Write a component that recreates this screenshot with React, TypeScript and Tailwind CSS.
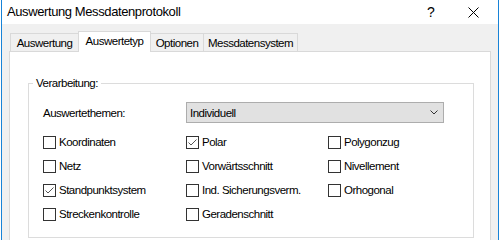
const options: { label: string; checked?: boolean }[] = [
  { label: "Koordinaten" },
  { label: "Polar", checked: true },
  { label: "Polygonzug" },
  { label: "Netz" },
  { label: "Vorwärtsschnitt" },
  { label: "Nivellement" },
  { label: "Standpunktsystem", checked: true },
  { label: "Ind. Sicherungsverm." },
  { label: "Orhogonal" },
  { label: "Streckenkontrolle" },
  { label: "Geradenschnitt" },
];

const tabs = ["Auswertung", "Auswertetyp", "Optionen", "Messdatensystem"];

function CheckBox({ label, checked }: { label: string; checked?: boolean }) {
  return (
    <div className="flex h-[24px] items-center gap-[3px]">
      <span className="grid h-[13px] w-[13px] place-items-center border border-[#333333] bg-white">
        {checked && (
          <svg width="11" height="11" viewBox="0 0 11 11" fill="none">
            <path d="M1.5 5.5 L4 8 L9.5 2.5" stroke="#555555" strokeWidth="1" />
          </svg>
        )}
      </span>
      <span>{label}</span>
    </div>
  );
}

export default function App() {
  return (
    <div className="h-[240px] w-[500px] overflow-hidden bg-white font-['Liberation_Sans',Arial,sans-serif] text-[11.5px] leading-[14px] tracking-[-0.5px] text-black">
      <div className="ml-[1px] flex h-full w-[498px] flex-col border-x border-[#1883d7]">
        {/* title bar */}
        <div className="flex h-[24px] shrink-0 items-center bg-white pl-[5px]">
          <span className="text-[13px] tracking-[-0.4px]">Auswertung Messdatenprotokoll</span>
          <span className="ml-auto w-[46px] pl-[4px] text-center text-[14px] tracking-normal">?</span>
          <span className="grid w-[46px] place-items-center pr-[4px]">
            <svg width="11" height="11" viewBox="0 0 11 11" fill="none">
              <path d="M0.5 0.5 L10.5 10.5 M10.5 0.5 L0.5 10.5" stroke="#000" strokeWidth="1" />
            </svg>
          </span>
        </div>

        <div className="flex-1 bg-[#f0f0f0] pl-[7px] pt-[7px]">
          {/* tabs */}
          <div className="ml-[1px] flex items-end">
            {tabs.map((t, i) =>
              i === 1 ? (
                <div
                  key={t}
                  className="relative z-10 -mb-px flex h-[21px] w-[73px] items-start justify-center border-x border-t border-[#d9d9d9] bg-white pt-[2px]"
                >
                  {t}
                </div>
              ) : (
                <div
                  key={t}
                  className={
                    i === 0
                      ? "flex h-[18px] w-[68px] items-center justify-center border-l border-t border-[#d9d9d9] bg-[#f0f0f0]"
                      : i === 2
                        ? "flex h-[18px] w-[53px] items-center justify-center border-r border-t border-[#d9d9d9] bg-[#f0f0f0]"
                        : "flex h-[18px] w-[94px] items-center justify-center border-r border-t border-[#d9d9d9] bg-[#f0f0f0]"
                  }
                >
                  {t}
                </div>
              )
            )}
          </div>

          {/* tab page */}
          <div className="h-[220px] w-[482px] border border-[#d9d9d9] bg-white pt-[24px]">
            <fieldset className="ml-[18px] mr-[16px] border border-[#dcdcdc]">
              <legend className="ml-[4px] px-[3px]">Verarbeitung:</legend>
              <div className="px-[14px] pb-[11px] pt-[12px]">
                <div className="flex items-center">
                  <span className="w-[143px]">Auswertethemen:</span>
                  <div className="flex h-[21px] w-[258px] items-center border border-[#adadad] bg-[#e1e1e1] pl-[3px] pr-[5px]">
                    <span>Individuell</span>
                    <svg className="ml-auto" width="8" height="5" viewBox="0 0 8 5" fill="none">
                      <path d="M0.5 0.5 L4 4 L7.5 0.5" stroke="#333" strokeWidth="1" />
                    </svg>
                  </div>
                </div>
                <div className="mt-[7px] grid grid-cols-[143px_142px_1fr]">
                  {options.map((o) => (
                    <CheckBox key={o.label} label={o.label} checked={o.checked} />
                  ))}
                </div>
              </div>
            </fieldset>
          </div>
        </div>
      </div>
    </div>
  );
}
